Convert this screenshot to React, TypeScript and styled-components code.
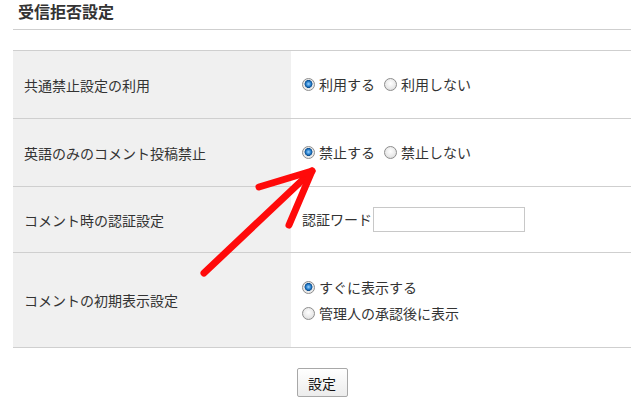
import React from "react";
import styled, { createGlobalStyle } from "styled-components";

const Global = createGlobalStyle`
  html, body { margin: 0; padding: 0; background: #fff; }
  body { font-family: "Noto Sans CJK JP", "Noto Sans", sans-serif; color: #333; }
`;

const Page = styled.div`
  position: relative;
  width: 640px;
  height: 400px;
  overflow: hidden;
`;

const Section = styled.div`
  margin: 0 9px 0 13px;
`;

const Title = styled.h2`
  margin: 0;
  height: 29px;
  padding-left: 5px;
  font-size: 16px;
  font-weight: bold;
  line-height: 22px;
  color: #333;
  border-bottom: 1px solid #cfcfcf;
  box-sizing: content-box;
`;

const Table = styled.div`
  margin-top: 20px;
  border-top: 1px solid #cfcfcf;
  display: grid;
  grid-template-columns: 278px 1fr;
`;

const Label = styled.div<{ $h: number }>`
  height: ${(p) => p.$h}px;
  background: #f0f0f0;
  border-bottom: 1px solid #cfcfcf;
  display: flex;
  align-items: center;
  padding-left: 11px;
  font-size: 14px;
  color: #333;
`;

const Value = styled.div<{ $h: number; $column?: boolean }>`
  height: ${(p) => p.$h}px;
  border-bottom: 1px solid #cfcfcf;
  display: flex;
  flex-direction: ${(p) => (p.$column ? "column" : "row")};
  align-items: ${(p) => (p.$column ? "flex-start" : "center")};
  justify-content: ${(p) => (p.$column ? "center" : "flex-start")};
  gap: ${(p) => (p.$column ? "5px" : "0")};
  padding-left: 11px;
  font-size: 14px;
  color: #333;
`;

const Option = styled.label<{ $gap?: number }>`
  display: inline-flex;
  align-items: center;
  margin-right: ${(p) => p.$gap ?? 0}px;
  line-height: 21px;
`;

const Radio = styled.span<{ $on?: boolean }>`
  width: 11px;
  height: 11px;
  border-radius: 50%;
  border: 1px solid #8d8d8d;
  background: ${(p) =>
    p.$on
      ? "radial-gradient(circle at 50% 45%, #9fd4ff 0, #2b83d0 28%, #0d4f8f 45%, #e6e6e6 52%, #f7f7f7 100%)"
      : "radial-gradient(circle at 50% 40%, #ffffff 0, #e8e8e8 60%, #cfcfcf 100%)"};
  margin-right: 4px;
  flex: none;
`;

const Input = styled.input`
  width: 152px;
  height: 25px;
  box-sizing: border-box;
  border: 1px solid #c8c8c8;
  margin: 0 0 0 1px;
  padding: 0 4px;
  font-size: 13px;
`;

const Actions = styled.div`
  display: flex;
  justify-content: center;
  margin-top: 20px;
`;

const Button = styled.button`
  width: 51px;
  height: 29px;
  border: 1px solid #a8a8a8;
  border-radius: 2px;
  background: linear-gradient(#ffffff, #ececec);
  font-family: "Noto Sans CJK JP", sans-serif;
  font-size: 14px;
  color: #111;
  padding: 0;
`;

const ArrowSvg = styled.svg`
  position: absolute;
  left: 0;
  top: 0;
  pointer-events: none;
`;

export default function App() {
  return (
    <Page>
      <Global />
      <Section>
        <Title>受信拒否設定</Title>
        <Table>
          <Label $h={67}>共通禁止設定の利用</Label>
          <Value $h={67}>
            <Option $gap={9}>
              <Radio $on />
              利用する
            </Option>
            <Option>
              <Radio />
              利用しない
            </Option>
          </Value>
          <Label $h={67}>英語のみのコメント投稿禁止</Label>
          <Value $h={67}>
            <Option $gap={9}>
              <Radio $on />
              禁止する
            </Option>
            <Option>
              <Radio />
              禁止しない
            </Option>
          </Value>
          <Label $h={65}>コメント時の認証設定</Label>
          <Value $h={65}>
            <Option>認証ワード</Option>
            <Input type="text" />
          </Value>
          <Label $h={94}>コメントの初期表示設定</Label>
          <Value $h={94} $column>
            <Option>
              <Radio $on />
              すぐに表示する
            </Option>
            <Option>
              <Radio />
              管理人の承認後に表示
            </Option>
          </Value>
        </Table>
        <Actions>
          <Button>設定</Button>
        </Actions>
      </Section>
      <ArrowSvg width="640" height="400" viewBox="0 0 640 400">
        <g stroke="#ff0a0a" strokeWidth="7" strokeLinecap="round" strokeLinejoin="round" fill="none">
          <path d="M204 273 L312 171" />
          <path d="M259 187 L312 171 L289 225" />
        </g>
      </ArrowSvg>
    </Page>
  );
}
